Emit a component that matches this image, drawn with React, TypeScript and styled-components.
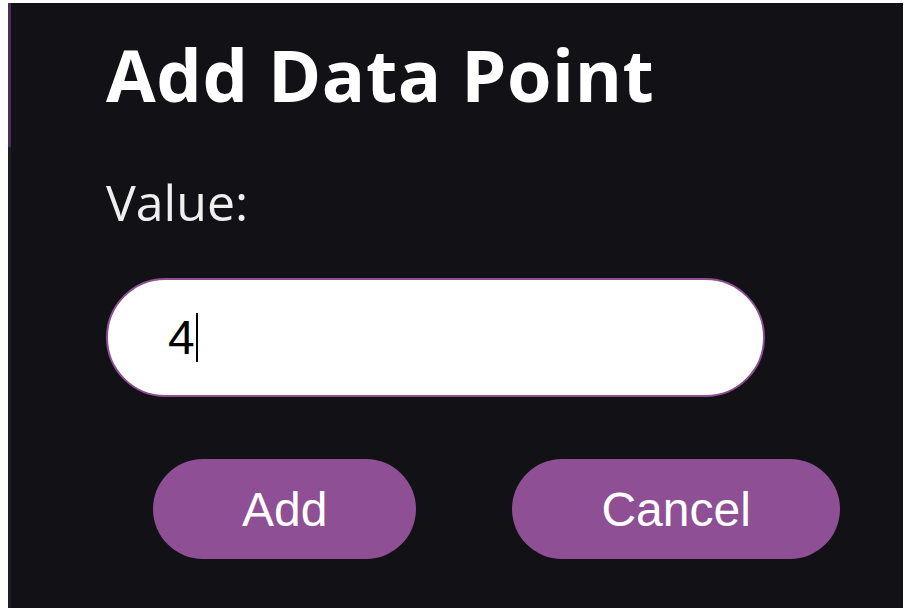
import { type ReactElement } from "react";

import styled, { createGlobalStyle } from "styled-components";

const GlobalStyle = createGlobalStyle({
	"html, body": {
		margin: 0,
		padding: 0,
		background: "#ffffff",
	},
	body: {
		width: 907,
		height: 614,
		overflow: "hidden",
	},
});

const StyledFrame = styled.div({
	boxSizing: "border-box",
	width: 907,
	height: 614,
	padding: "3px 4px 6px 8px",
	display: "flex",
});

const StyledDialog = styled.div({
	flex: 1,
	display: "flex",
	flexDirection: "column",
	alignItems: "flex-start",
	background: "#111116",
	borderLeft: "3px solid",
	borderImage: "linear-gradient(to bottom, #4b2d5b 145px, #1c1d27 145px) 1",
	padding: "35px 0 49px 95px",
});

const StyledTitle = styled.h1({
	margin: 0,
	fontFamily: '"Open Sans", "DejaVu Sans", sans-serif',
	fontWeight: 700,
	fontSize: 72,
	lineHeight: "72px",
	color: "#ffffff",
	letterSpacing: 0.6,
});

const StyledLabel = styled.label({
	marginTop: 67,
	fontFamily: '"Open Sans", "DejaVu Sans", sans-serif',
	fontWeight: 500,
	fontSize: 50,
	lineHeight: "51px",
	color: "#efefef",
});

const StyledField = styled.div({
	boxSizing: "border-box",
	marginTop: 50,
	width: 659,
	height: 119,
	display: "flex",
	alignItems: "center",
	padding: "0 0 0 60px",
	background: "#ffffff",
	border: "2px solid #8e4f94",
	borderRadius: 60,
	fontFamily: '"Liberation Sans", Arial, sans-serif',
	fontSize: 48,
	color: "#000000",
});

const StyledCaret = styled.span({
	display: "inline-block",
	width: 2,
	height: 49,
	marginLeft: 1,
	background: "#000000",
});

const StyledActions = styled.div({
	marginTop: 62,
	paddingLeft: 47,
	display: "flex",
	gap: 96,
});

const StyledButton = styled.button({
	boxSizing: "border-box",
	height: 100,
	padding: "0 89px",
	border: "none",
	borderRadius: 50,
	background: "#8e4f94",
	color: "#ffffff",
	fontFamily: '"Liberation Sans", Arial, sans-serif',
	fontSize: 48,
	cursor: "pointer",
});

export default function App(): ReactElement {
	return (
		<>
			<GlobalStyle />
			<StyledFrame>
				<StyledDialog>
					<StyledTitle>Add Data Point</StyledTitle>

					<StyledLabel>Value:</StyledLabel>

					<StyledField>
						4
						<StyledCaret />
					</StyledField>

					<StyledActions>
						<StyledButton type="button">Add</StyledButton>
						<StyledButton type="button">Cancel</StyledButton>
					</StyledActions>
				</StyledDialog>
			</StyledFrame>
		</>
	);
}
